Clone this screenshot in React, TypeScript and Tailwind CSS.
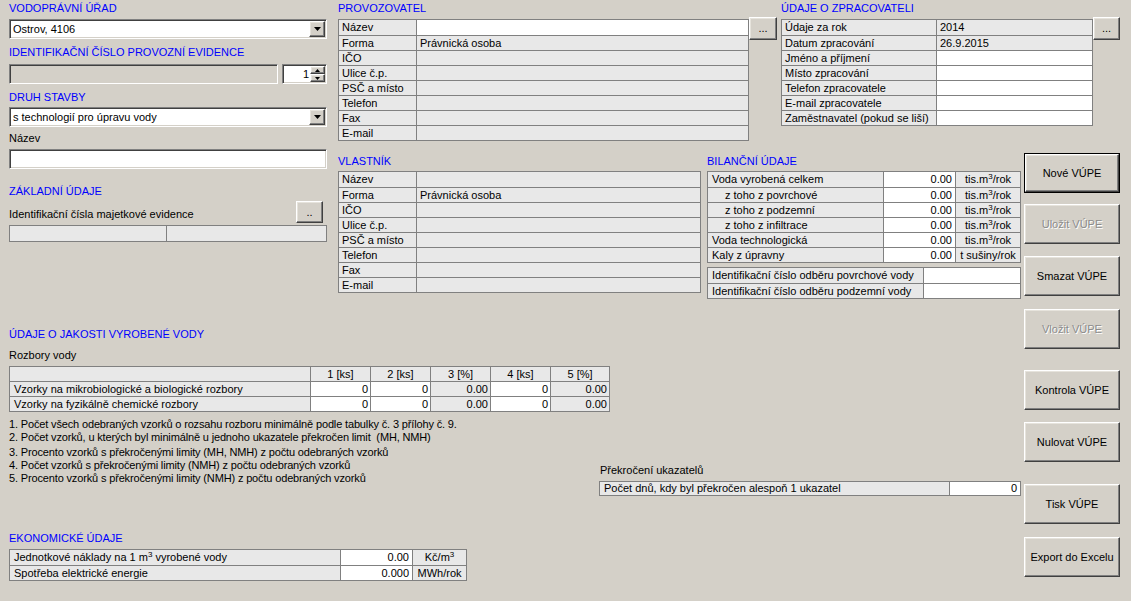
import React from "react";

// classic 3D edges
const raised =
  "border border-t-white border-l-white border-r-[#404040] border-b-[#404040] shadow-[inset_-1px_-1px_0_#808080,inset_1px_1px_0_#e6e3dc]";
const sunken =
  "border border-t-[#808080] border-l-[#808080] border-r-white border-b-white shadow-[inset_1px_1px_0_#404040,inset_-1px_-1px_0_#d4d0c8]";

type Cell = { t?: React.ReactNode; w?: string; white?: boolean; cls?: string };

function Heading({ children, className = "" }: { children: React.ReactNode; className?: string }) {
  return <div className={`text-[#0000ff] leading-[14px] h-[14px] whitespace-nowrap ${className}`}>{children}</div>;
}

function Grid({ rows, className = "", heights }: { rows: Cell[][]; className?: string; heights?: string[] }) {
  return (
    <div className={`border border-[#808080] flex flex-col ${className}`}>
      {rows.map((r, i) => (
        <div
          key={i}
          className={`flex ${heights ? heights[i] : "h-[15px] leading-[15px]"} ${i > 0 ? "border-t border-[#808080]" : ""}`}
        >
          {r.map((c, j) => (
            <div
              key={j}
              className={`${c.w ?? "flex-1"} ${j > 0 ? "border-l border-[#808080]" : ""} ${
                c.white ? "bg-white" : "bg-[#e8e8e8]"
              } ${c.cls ?? "pl-[3px]"} whitespace-nowrap overflow-hidden`}
            >
              {c.t}
            </div>
          ))}
        </div>
      ))}
    </div>
  );
}

function Btn({
  children,
  disabled,
  def,
  className = "",
}: {
  children: React.ReactNode;
  disabled?: boolean;
  def?: boolean;
  className?: string;
}) {
  const inner = (
    <div
      className={`w-full h-full flex items-center justify-center bg-[#d4d0c8] whitespace-nowrap ${raised} ${
        disabled ? "text-[#8c8c8c] [text-shadow:1px_1px_0_#ffffff]" : ""
      }`}
    >
      {children}
    </div>
  );
  return def ? <div className={`border border-black ${className}`}>{inner}</div> : <div className={className}>{inner}</div>;
}

function Arrow({ up }: { up?: boolean }) {
  return (
    <svg width="7" height="4" viewBox="0 0 7 4">
      <path d={up ? "M3.5 0L7 4H0z" : "M0 0h7L3.5 4z"} fill="black" />
    </svg>
  );
}

function Combo({ value }: { value: string }) {
  return (
    <div className={`w-[318px] h-[20px] bg-white flex items-center pl-[3px] pr-[1px] ${sunken}`}>
      <span className="flex-1 leading-[14px] whitespace-nowrap">{value}</span>
      <div className={`w-[16px] h-[16px] bg-[#d4d0c8] flex items-center justify-center ${raised}`}>
        <Arrow />
      </div>
    </div>
  );
}

const m3 = (
  <>
    tis.m<sup className="text-[8px]">3</sup>/rok
  </>
);

export default function App() {
  const osoba = (first: boolean): Cell[][] => [
    [{ t: "Název", w: "w-[77px]" }, { white: first }],
    [{ t: "Forma", w: "w-[77px]" }, { t: "Právnická osoba" }],
    [{ t: "IČO", w: "w-[77px]" }, {}],
    [{ t: "Ulice č.p.", w: "w-[77px]" }, {}],
    [{ t: "PSČ a místo", w: "w-[77px]" }, {}],
    [{ t: "Telefon", w: "w-[77px]" }, {}],
    [{ t: "Fax", w: "w-[77px]" }, {}],
    [{ t: "E-mail", w: "w-[77px]" }, {}],
  ];

  const zpr: Cell[][] = [
    [{ t: "Údaje za rok", w: "w-[154px]" }, { t: "2014" }],
    [{ t: "Datum zpracování", w: "w-[154px]" }, { t: "26.9.2015" }],
    [{ t: "Jméno a příjmení", w: "w-[154px]" }, { white: true }],
    [{ t: "Místo zpracování", w: "w-[154px]" }, { white: true }],
    [{ t: "Telefon zpracovatele", w: "w-[154px]" }, { white: true }],
    [{ t: "E-mail zpracovatele", w: "w-[154px]" }, { white: true }],
    [{ t: "Zaměstnavatel (pokud se liší)", w: "w-[154px]" }, { white: true }],
  ];

  const bil = (label: string, unit: React.ReactNode, indent = false): Cell[] => [
    { t: label, w: "w-[175px]", cls: indent ? "pl-[17px]" : "pl-[4px]" },
    { t: "0.00", w: "w-[72px]", white: true, cls: "text-right pr-[3px]" },
    { t: unit, cls: "text-center" },
  ];

  const num = (v: string, white: boolean, last = false): Cell => ({
    t: v,
    w: last ? "flex-1" : "w-[60px]",
    white,
    cls: "text-right pr-[2px]",
  });

  return (
    <div className="w-[1131px] h-[601px] overflow-hidden bg-[#d4d0c8] font-['Liberation_Sans',Arial,sans-serif] text-[11px] text-black grid grid-cols-[8px_319px_11px_362px_7px_74px_240px_3px_96px_1fr] grid-rows-[152px_158px_1fr]">
      {/* left column */}
      <div className="col-start-2 row-start-1 row-span-2 flex flex-col pl-[1px]">
        <Heading className="mt-[1px]">VODOPRÁVNÍ ÚŘAD</Heading>
        <div className="mt-[4px]">
          <Combo value="Ostrov, 4106" />
        </div>
        <Heading className="mt-[6px]">IDENTIFIKAČNÍ ČÍSLO PROVOZNÍ EVIDENCE</Heading>
        <div className="mt-[5px] flex gap-[4px]">
          <div className={`w-[269px] h-[20px] bg-[#d4d0c8] ${sunken}`} />
          <div className={`w-[45px] h-[20px] bg-white flex pl-[2px] pr-[1px] py-[1px] ${sunken}`}>
            <span className="flex-1 text-right pr-[1px] leading-[16px]">1</span>
            <div className="w-[15px] flex flex-col">
              <div className={`flex-1 bg-[#d4d0c8] flex items-center justify-center ${raised}`}>
                <svg width="5" height="3" viewBox="0 0 5 3">
                  <path d="M2.5 0L5 3H0z" fill="black" />
                </svg>
              </div>
              <div className={`flex-1 bg-[#d4d0c8] flex items-center justify-center ${raised}`}>
                <svg width="5" height="3" viewBox="0 0 5 3">
                  <path d="M0 0h5L2.5 3z" fill="black" />
                </svg>
              </div>
            </div>
          </div>
        </div>
        <Heading className="mt-[6px]">DRUH STAVBY</Heading>
        <div className="mt-[3px]">
          <Combo value="s technologií pro úpravu vody" />
        </div>
        <div className="mt-[4px] leading-[14px] h-[14px]">Název</div>
        <div className={`mt-[4px] w-[318px] h-[20px] bg-white ${sunken}`} />
        <Heading className="mt-[15px]">ZÁKLADNÍ ÚDAJE</Heading>
        <div className="mt-[3px] flex items-end w-[318px] h-[22px]">
          <span className="flex-1 leading-[14px] mb-[2px] whitespace-nowrap">Identifikační čísla majetkové evidence</span>
          <Btn className="w-[27px] h-[22px] mr-[4px]">..</Btn>
        </div>
        <Grid className="mt-[2px] w-[318px]" rows={[[{ w: "w-[156px]" }, {}]]} />
      </div>

      {/* provozovatel */}
      <div className="col-start-4 col-span-3 row-start-1 flex flex-col">
        <Heading className="mt-[1px]">PROVOZOVATEL</Heading>
        <div className="mt-[4px] flex items-start">
          <Grid className="w-[411px]" rows={osoba(true)} />
          <Btn className="w-[28px] h-[23px] -mt-[2px]">...</Btn>
        </div>
      </div>

      {/* zpracovatel */}
      <div className="col-start-7 col-span-3 row-start-1 flex flex-col">
        <Heading className="mt-[1px]">ÚDAJE O ZPRACOVATELI</Heading>
        <div className="mt-[4px] flex items-start">
          <Grid className="w-[313px]" rows={zpr} />
          <Btn className="w-[27px] h-[23px] -mt-[2px]">...</Btn>
        </div>
      </div>

      {/* vlastnik */}
      <div className="col-start-4 row-start-2 flex flex-col">
        <Heading className="mt-[2px]">VLASTNÍK</Heading>
        <Grid className="mt-[3px] w-[363px]" rows={osoba(false)} />
      </div>

      {/* bilancni */}
      <div className="col-start-6 col-span-2 row-start-2 flex flex-col">
        <Heading className="mt-[2px]">BILANČNÍ ÚDAJE</Heading>
        <Grid
          className="mt-[3px] w-[314px]"
          rows={[
            bil("Voda vyrobená celkem", m3),
            bil("z toho z povrchové", m3, true),
            bil("z toho z podzemní", m3, true),
            bil("z toho z infiltrace", m3, true),
            bil("Voda technologická", m3),
            bil("Kaly z úpravny", "t sušiny/rok"),
          ]}
        />
        <Grid
          className="mt-[4px] w-[314px]"
          rows={[
            [{ t: "Identifikační číslo odběru povrchové vody", w: "w-[215px]", cls: "pl-[4px]" }, { white: true }],
            [{ t: "Identifikační číslo odběru podzemní vody", w: "w-[215px]", cls: "pl-[4px]" }, { white: true }],
          ]}
        />
      </div>

      {/* buttons */}
      <div className="col-start-9 row-start-2 row-span-2 flex flex-col">
        <Btn def className="mt-[1px] h-[40px]">Nové VÚPE</Btn>
        <Btn disabled className="mt-[11px] h-[40px]">Uložit VÚPE</Btn>
        <Btn className="mt-[12px] h-[40px]">Smazat VÚPE</Btn>
        <Btn disabled className="mt-[13px] h-[40px]">Vložit VÚPE</Btn>
        <Btn className="mt-[21px] h-[40px]">Kontrola VÚPE</Btn>
        <Btn className="mt-[12px] h-[40px]">Nulovat VÚPE</Btn>
        <Btn className="mt-[22px] h-[40px]">Tisk VÚPE</Btn>
        <Btn className="mt-[13px] h-[40px]">Export do Excelu</Btn>
      </div>

      {/* bottom */}
      <div className="col-start-1 col-span-8 row-start-3 flex flex-col pl-[9px]">
        <Heading className="mt-[17px]">ÚDAJE O JAKOSTI VYROBENÉ VODY</Heading>
        <div className="mt-[7px] leading-[14px] h-[14px]">Rozbory vody</div>
        <Grid
          className="mt-[4px] w-[601px]"
          heights={["h-[14px] leading-[14px]", "h-[15px] leading-[15px]", "h-[15px] leading-[15px]"]}
          rows={[
            [
              { w: "w-[300px]" },
              { t: "1 [ks]", w: "w-[60px]", cls: "text-center" },
              { t: "2 [ks]", w: "w-[60px]", cls: "text-center" },
              { t: "3 [%]", w: "w-[60px]", cls: "text-center" },
              { t: "4 [ks]", w: "w-[60px]", cls: "text-center" },
              { t: "5 [%]", cls: "text-center" },
            ],
            [
              { t: "Vzorky na mikrobiologické a biologické rozbory", w: "w-[300px]", cls: "pl-[4px]" },
              num("0", true),
              num("0", true),
              num("0.00", false),
              num("0", true),
              num("0.00", false, true),
            ],
            [
              { t: "Vzorky na fyzikálně chemické rozbory", w: "w-[300px]", cls: "pl-[4px]" },
              num("0", true),
              num("0", true),
              num("0.00", false),
              num("0", true),
              num("0.00", false, true),
            ],
          ]}
        />
        <div className="mt-[6px] flex items-start">
          <div className="flex flex-col leading-[13px] whitespace-nowrap tracking-[-0.15px]">
            <div>1. Počet všech odebraných vzorků o rozsahu rozboru minimálně podle tabulky č. 3 přílohy č. 9.</div>
            <div>2. Počet vzorků, u kterých byl minimálně u jednoho ukazatele překročen limit&nbsp; (MH, NMH)</div>
            <div className="mt-[2px]">3. Procento vzorků s překročenými limity (MH, NMH) z počtu odebraných vzorků</div>
            <div>4. Počet vzorků s překročenými limity (NMH) z počtu odebraných vzorků</div>
            <div>5. Procento vzorků s překročenými limity (NMH) z počtu odebraných vzorků</div>
          </div>
          <div className="ml-auto mr-[3px] mt-[45px] flex flex-col">
            <div className="leading-[14px] h-[14px] pl-[1px]">Překročení ukazatelů</div>
            <Grid
              className="mt-[4px] w-[422px]"
              heights={["h-[13px] leading-[13px]"]}
              rows={[
                [
                  { t: "Počet dnů, kdy byl překročen alespoň 1 ukazatel", w: "w-[349px]", cls: "pl-[4px]" },
                  { t: "0", white: true, cls: "text-right pr-[3px]" },
                ],
              ]}
            />
          </div>
        </div>
        <Heading className="mt-[35px]">EKONOMICKÉ ÚDAJE</Heading>
        <Grid
          className="mt-[4px] w-[458px]"
          rows={[
            [
              {
                t: (
                  <>
                    Jednotkové náklady na 1 m<sup className="text-[8px]">3</sup> vyrobené vody
                  </>
                ),
                w: "w-[330px]",
                cls: "pl-[4px]",
              },
              { t: "0.00", w: "w-[72px]", white: true, cls: "text-right pr-[3px]" },
              {
                t: (
                  <>
                    Kč/m<sup className="text-[8px]">3</sup>
                  </>
                ),
                cls: "text-center",
              },
            ],
            [
              { t: "Spotřeba elektrické energie", w: "w-[330px]", cls: "pl-[4px]" },
              { t: "0.000", w: "w-[72px]", white: true, cls: "text-right pr-[3px]" },
              { t: "MWh/rok", cls: "text-center" },
            ],
          ]}
        />
      </div>
    </div>
  );
}
